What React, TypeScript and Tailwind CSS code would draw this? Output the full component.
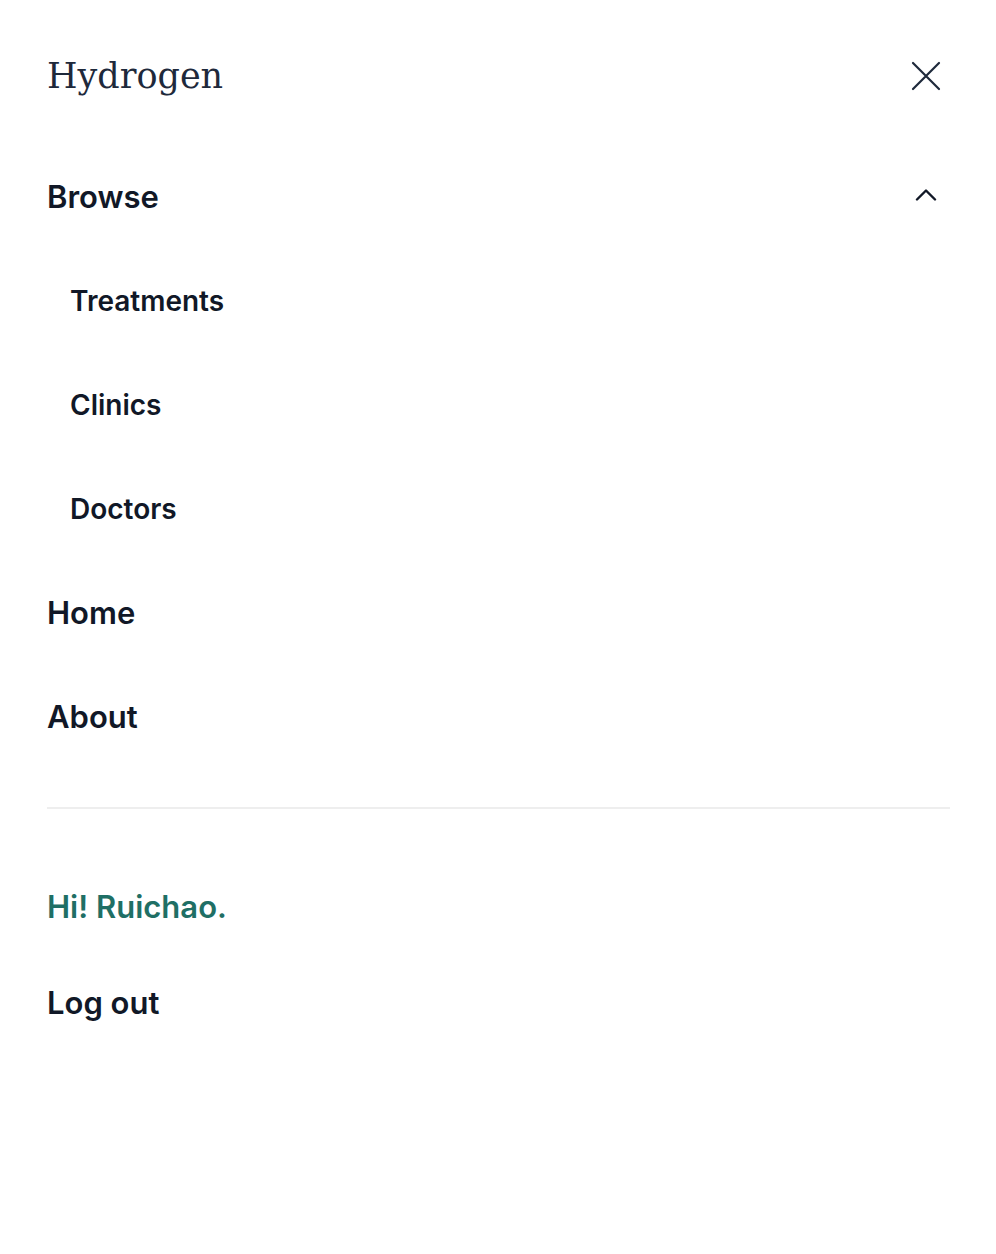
import React from "react";

const CloseIcon = () => (
  <svg width="30" height="30" viewBox="0 0 30 30" fill="none" stroke="#1e293b" strokeWidth="2.2" strokeLinecap="round">
    <path d="M2 2l26 26M28 2L2 28" />
  </svg>
);

const ChevronUp = () => (
  <svg width="22" height="13" viewBox="0 0 22 13" fill="none" stroke="#111827" strokeWidth="2.4" strokeLinecap="round" strokeLinejoin="round">
    <path d="M2 11.5l9-9 9 9" />
  </svg>
);

const subLinks = ["Treatments", "Clinics", "Doctors"];

export default function App() {
  return (
    <div className="min-h-[1254px] w-full bg-white px-[47px] pt-[52px] text-[#111827] [font-family:Inter,'Noto_Sans',sans-serif]">
      <div className="flex items-center justify-between">
        <span className="text-[35px] leading-[48px] text-[#1e293b] [font-family:'DejaVu_Serif',Georgia,serif]">
          Hydrogen
        </span>
        <button className="mr-[8px]">
          <CloseIcon />
        </button>
      </div>

      <nav className="mt-[75px] flex flex-col">
        <div className="flex h-[44px] items-center justify-between">
          <span className="text-[31px] font-semibold">Browse</span>
          <span className="mr-[12px] -mt-[5px]">
            <ChevronUp />
          </span>
        </div>
        <div className="flex flex-col">
          {subLinks.map((l) => (
            <a key={l} className="mt-[60px] flex h-[44px] items-center pl-[23px] text-[28px] font-semibold">
              {l}
            </a>
          ))}
        </div>
        <a className="mt-[60px] flex h-[44px] items-center text-[31px] font-semibold">Home</a>
        <a className="mt-[60px] flex h-[44px] items-center text-[31px] font-semibold">About</a>
      </nav>

      <div className="mt-[68px] -mr-[1px] border-t-2 border-[#eeeeee]" />

      <div className="mt-[76px] flex h-[44px] items-center text-[31px] font-semibold text-[#1f6f65]">
        Hi! Ruichao.
      </div>
      <div className="mt-[52px] flex h-[44px] items-center text-[31px] font-semibold">Log out</div>
    </div>
  );
}
